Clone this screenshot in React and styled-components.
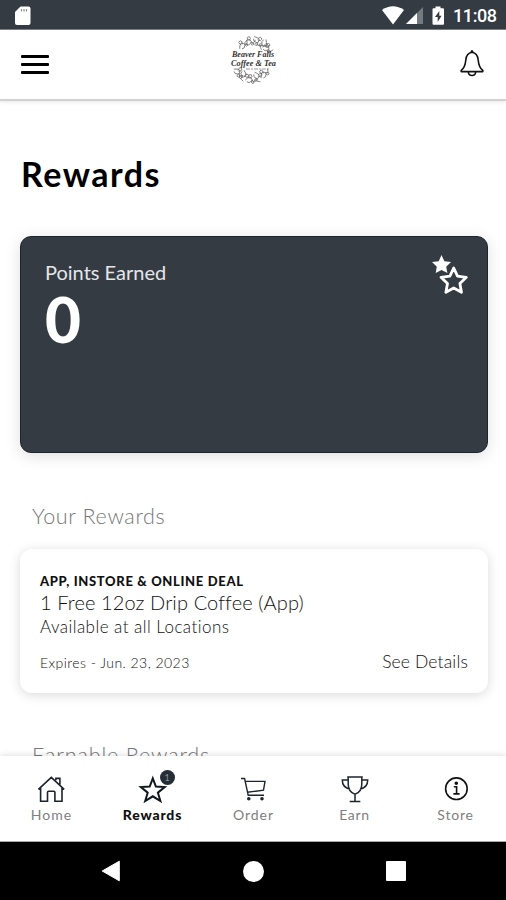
import React from "react";
import styled, { createGlobalStyle } from "styled-components";

const tabs = [
  { label: "Home", icon: HomeIcon, spacing: 1 },
  { label: "Rewards", icon: StarIcon, spacing: 0.8, active: true, badge: 1 },
  { label: "Order", icon: CartIcon, spacing: 1 },
  { label: "Earn", icon: TrophyIcon, spacing: 0.7 },
  { label: "Store", icon: InfoIcon, spacing: 0.8 },
];

function App() {
  return (
    <Screen>
      <GlobalStyle />
      <StatusBar>
        <SdCardIcon />
        <StatusRight>
          <SignalIcons />
          <Clock>11:08</Clock>
        </StatusRight>
      </StatusBar>
      <Header>
        <MenuButton aria-label="Menu">
          <MenuLine />
          <MenuLine />
          <MenuLine />
        </MenuButton>
        <Logo />
        <BellIcon />
      </Header>
      <Content>
        <Title>Rewards</Title>
        <PointsCard>
          <div>
            <PointsLabel>Points Earned</PointsLabel>
            <Points>0</Points>
          </div>
          <TwoStars />
        </PointsCard>
        <SectionTitle>Your Rewards</SectionTitle>
        <DealCard>
          <DealType>APP, INSTORE &amp; ONLINE DEAL</DealType>
          <DealName>1 Free 12oz Drip Coffee (App)</DealName>
          <DealPlace>Available at all Locations</DealPlace>
          <DealFooter>
            <Expires>Expires - Jun. 23, 2023</Expires>
            <Details>See Details</Details>
          </DealFooter>
        </DealCard>
        <SectionTitle>Earnable Rewards</SectionTitle>
      </Content>
      <TabBar>
        {tabs.map((tab) => (
          <Tab key={tab.label}>
            <TabIcon>
              <tab.icon />
              {tab.badge && <Badge>{tab.badge}</Badge>}
            </TabIcon>
            <TabLabel $active={tab.active} $spacing={tab.spacing}>
              {tab.label}
            </TabLabel>
          </Tab>
        ))}
      </TabBar>
      <SystemNav>
        <svg width="20" height="22" viewBox="0 0 20 22">
          <path d="M18.3 1.2V20.8L1.2 11Z" fill="#fff" stroke="#fff" strokeLinejoin="round" />
        </svg>
        <HomeDot />
        <RecentSquare />
      </SystemNav>
    </Screen>
  );
}

function SdCardIcon() {
  return (
    <svg width="18" height="20" viewBox="0 0 18 20">
      <path d="M6.5 0.5H14.5Q16.5 0.5 16.5 2.5V17Q16.5 19 14.5 19H3Q1 19 1 17V6Z" fill="#fff" />
      <path d="M7.5 3V5.5M10 3V5.5M12.5 3V5.5" stroke="#8a9095" strokeWidth="1.2" />
    </svg>
  );
}

function SignalIcons() {
  return (
    <svg width="64" height="20" viewBox="0 0 64 20">
      <path d="M0 4Q11 -3.5 22 4L11 18.5Z" fill="#fff" />
      <path d="M41 1V18H24Z" fill="#737a80" />
      <path d="M35 7V18H24Z" fill="#fff" />
      <path d="M53.5 0.5H58.5V2.3H61Q62 2.3 62 3.5V17.5Q62 18.8 61 18.8H51.5Q50.5 18.8 50.5 17.5V3.5Q50.5 2.3 51.5 2.3H53.5Z" fill="#fff" />
      <path d="M57.3 5L53 11H55.7V16L59.6 9.7H57.3Z" fill="#343b43" />
    </svg>
  );
}

const sprigs = [
  [16, 10, -25], [23, 7, 10], [31, 7, 80], [37, 11, 140], [41, 14, 40],
  [12, 38, 60], [17, 42, 120], [24, 45, 20], [31, 43, 85], [37, 39, -30],
];

function Logo() {
  return (
    <svg width="52" height="54" viewBox="0 0 52 54">
      <g fill="none" stroke="#666" strokeWidth="0.75">
        {sprigs.map(([x, y, turn]) => (
          <g key={x + "-" + y} transform={`translate(${x} ${y}) rotate(${turn})`}>
            <path d="M-5 3Q-2 -4 1 0T5 -2M-2 0Q-5 -4 -1 -4Q1 -3 -1 0M1 1Q2 5 4 3Q5 1 1 1" />
            <path d="M-3 4Q0 5 1 2" />
          </g>
        ))}
      </g>
      <g fill="#333" fontFamily="'Liberation Serif', serif" fontStyle="italic" fontWeight="bold">
        <text x="5" y="23" fontSize="8" textLength="42" lengthAdjust="spacingAndGlyphs">
          Beaver Falls
        </text>
        <text x="4" y="32" fontSize="8.5" textLength="45" lengthAdjust="spacingAndGlyphs">
          Coffee &amp; Tea
        </text>
      </g>
      <path d="M19 35H43" stroke="#888" strokeWidth="0.8" strokeDasharray="4 1 2 1" />
    </svg>
  );
}

function BellIcon() {
  return (
    <svg width="26" height="30" viewBox="0 0 26 30" fill="none" stroke="#111" strokeWidth="1.6" strokeLinejoin="round">
      <path d="M13 3.2C8.6 4 7 8 6.8 11C6.4 16 5.4 19 2.2 21.4V22.6H23.8V21.4C20.6 19 19.6 16 19.2 11C19 8 17.4 4 13 3.2Z" />
      <path d="M9.3 23C9.7 27.6 16.3 27.6 16.7 23M12 3L13 1.8L14 3" />
    </svg>
  );
}

function TwoStars() {
  return (
    <svg width="38" height="42" viewBox="0 0 38 42">
      <path d="M10.5 1L13.4 7.2L20 8L15.2 12.7L16.4 19L10.5 16L4.7 19L5.8 12.7L1 8L7.7 7.2Z" fill="#fff" />
      <path
        d="M22.7 14L26.5 22.2L35.3 23.3L28.9 29.5L30.5 38.3L22.7 34L14.9 38.3L16.5 29.5L10 23.3L18.9 22.2Z"
        fill="#343b43"
        stroke="#fff"
        strokeWidth="2.8"
        strokeLinejoin="round"
      />
    </svg>
  );
}

function HomeIcon() {
  return (
    <svg width="30" height="30" viewBox="0 0 30 30" fill="none" stroke="#1c252d" strokeWidth="1.6">
      <path d="M1.4 14.4L14.3 2.4L27.2 14.4M18.9 5.2V3.4H22.9V9.4M3.6 13V26.2H10.5V17.3Q10.5 16.2 11.6 16.2H16.8Q17.9 16.2 17.9 17.3V26.2H25V13" />
    </svg>
  );
}

function StarIcon() {
  return (
    <svg width="30" height="30" viewBox="0 0 30 30" fill="none" stroke="#10181f" strokeWidth="2">
      <path d="M14.8 3.4L17.9 11.6L26.7 12.1L19.9 17.7L22.4 26L14.8 21.3L7.2 26L9.7 17.7L2.9 12.1L11.7 11.6Z" />
    </svg>
  );
}

function CartIcon() {
  return (
    <svg width="30" height="30" viewBox="0 0 30 30" fill="none" stroke="#1c252d" strokeWidth="1.4">
      <path d="M2 3.5H5.6L9.2 20.3H25M6.6 6.4H26L24.5 15.2L8.2 17.3" />
      <circle cx="9.8" cy="23.8" r="1.1" fill="#1c252d" />
      <circle cx="23" cy="23.8" r="1.1" fill="#1c252d" />
    </svg>
  );
}

function TrophyIcon() {
  return (
    <svg width="30" height="30" viewBox="0 0 30 30" fill="none" stroke="#1c252d" strokeWidth="1.5">
      <path d="M7.2 2H22.8M8.2 2V9Q8.2 17 15 19.2Q21.8 17 21.8 9V2M15 19V26M9.7 26.6H20.3M8.2 5H2.3Q2.2 12.5 10 14M21.8 5H27.7Q27.8 12.5 20 14" />
    </svg>
  );
}

function InfoIcon() {
  return (
    <svg width="30" height="30" viewBox="0 0 30 30" fill="none" stroke="#111" strokeWidth="1.6">
      <circle cx="15.4" cy="13.7" r="10.8" />
      <path d="M12.8 11.7H15.6V18.7M12.4 18.9H18.6" />
      <circle cx="15.3" cy="8.3" r="1" fill="#111" />
    </svg>
  );
}

const GlobalStyle = createGlobalStyle`
  * {
    box-sizing: border-box;
  }

  body {
    margin: 0;
    background: #fff;
    font-family: Lato, "Liberation Sans", sans-serif;
  }
`;

const Screen = styled.div`
  display: flex;
  flex-direction: column;
  height: 900px;
  overflow: hidden;
`;

const StatusBar = styled.div`
  display: flex;
  align-items: center;
  justify-content: space-between;
  height: 30px;
  padding: 2px 9px 0 14px;
  background: #343b43;
  border-bottom: 1px solid #7d8185;
  flex-shrink: 0;
`;

const StatusRight = styled.div`
  display: flex;
  align-items: center;
  gap: 7px;
`;

const Clock = styled.span`
  font: 500 18px/20px Roboto, sans-serif;
  width: 44px;
  color: #fff;
  letter-spacing: -0.4px;
`;

const Header = styled.header`
  display: flex;
  align-items: center;
  justify-content: space-between;
  height: 71px;
  padding: 0 21px;
  border-bottom: 2px solid #d2d2d2;
  box-shadow: 0 1px 4px rgba(0, 0, 0, 0.1);
  flex-shrink: 0;

  > svg:last-child {
    margin: 0 0 2px 2px;
  }

  > svg:nth-child(2) {
    margin-bottom: 8px;
  }
`;

const MenuButton = styled.button`
  display: flex;
  flex-direction: column;
  gap: 5px;
  width: 28px;
  padding: 0;
  border: none;
  background: none;
`;

const MenuLine = styled.span`
  height: 3px;
  border-radius: 1px;
  background: #000;
`;

const Content = styled.main`
  flex: 1;
  min-height: 0;
  padding: 53px 18px 0 20px;
  overflow: hidden;
`;

const Title = styled.h1`
  margin: 0 0 42px 1px;
  font-size: 34px;
  line-height: 40px;
  font-weight: 700;
  letter-spacing: 1.5px;
  color: #000;
`;

const PointsCard = styled.section`
  display: flex;
  justify-content: space-between;
  height: 217px;
  padding: 23px 18px 0 24px;
  border: 1px solid #1b2530;
  border-radius: 11px;
  background: #343b43;
  color: #fff;
  box-shadow: 0 3px 16px rgba(0, 0, 0, 0.13);

  > svg {
    margin-top: -6px;
  }
`;

const PointsLabel = styled.div`
  font-size: 20px;
  line-height: 24px;
  color: #e4e6e8;
`;

const Points = styled.div`
  margin-top: 3px;
  font-size: 62px;
  line-height: 64px;
  font-weight: 900;
`;

const SectionTitle = styled.h2`
  margin: 50px 0 20px 12px;
  font-size: 21.5px;
  line-height: 26px;
  font-weight: 300;
  letter-spacing: 0.65px;
  color: #777;
`;

const DealCard = styled.section`
  height: 144px;
  padding: 24px 20px 0;
  border-radius: 12px;
  background: #fff;
  box-shadow: 0 2px 12px rgba(0, 0, 0, 0.15);

  & + ${SectionTitle} {
    margin-top: 49px;
    letter-spacing: 0.85px;
  }
`;

const DealType = styled.div`
  font-size: 13px;
  line-height: 16px;
  font-weight: 900;
  letter-spacing: 0.66px;
  color: #111;
`;

const DealName = styled.div`
  margin-top: 1px;
  font-size: 20px;
  line-height: 24px;
  font-weight: 300;
  letter-spacing: 0.12px;
  color: #111;
`;

const DealPlace = styled.div`
  margin-top: 2px;
  font-size: 17px;
  line-height: 22px;
  font-weight: 300;
  letter-spacing: 0.46px;
  color: #111;
`;

const DealFooter = styled.div`
  display: flex;
  align-items: baseline;
  justify-content: space-between;
  margin-top: 13px;
  font-weight: 300;
  color: #111;
`;

const Expires = styled.span`
  font-size: 14px;
  letter-spacing: 0.45px;
`;

const Details = styled.span`
  font-size: 17.5px;
  line-height: 22px;
  letter-spacing: 0.15px;
`;

const TabBar = styled.nav`
  display: grid;
  grid-template-columns: repeat(5, 1fr);
  height: 86px;
  padding: 19px 0 0 1px;
  background: #fff;
  border-bottom: 1px solid #aaa;
  box-shadow: 0 -1px 6px rgba(0, 0, 0, 0.12);
  flex-shrink: 0;
  z-index: 1;
`;

const Tab = styled.div`
  display: flex;
  flex-direction: column;
  align-items: center;
`;

const TabIcon = styled.div`
  position: relative;
  width: 30px;
  height: 30px;
`;

const Badge = styled.span`
  position: absolute;
  top: -5px;
  right: -7px;
  width: 15px;
  height: 15px;
  border-radius: 50%;
  background: #252e37;
  color: #8d949b;
  font-size: 9px;
  line-height: 15px;
  text-align: center;
`;

const TabLabel = styled.span`
  margin-top: 2px;
  font-size: 14px;
  line-height: 16px;
  font-weight: ${(props) => (props.$active ? 900 : 400)};
  letter-spacing: ${(props) => props.$spacing}px;
  color: ${(props) => (props.$active ? "#111" : "#808080")};
`;

const SystemNav = styled.div`
  display: flex;
  align-items: center;
  justify-content: space-between;
  height: 58px;
  padding: 0 100px 0 101px;
  background: #000;
  flex-shrink: 0;
`;

const HomeDot = styled.span`
  width: 21px;
  height: 21px;
  border-radius: 50%;
  background: #fff;
`;

const RecentSquare = styled.span`
  width: 20px;
  height: 20px;
  border-radius: 1px;
  background: #fff;
`;

export default App;
